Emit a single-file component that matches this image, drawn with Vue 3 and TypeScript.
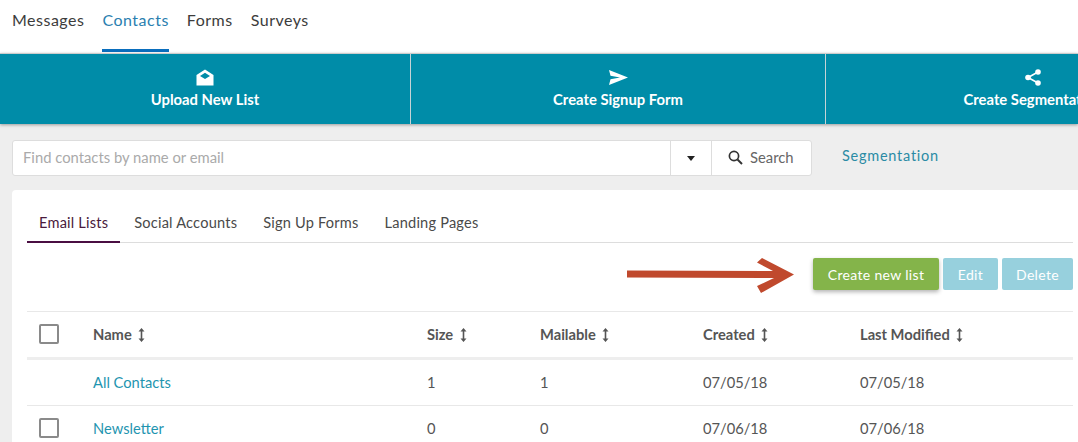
<script setup lang="ts">
const navItems = ['Messages', 'Contacts', 'Forms', 'Surveys']
const tabs = ['Email Lists', 'Social Accounts', 'Sign Up Forms', 'Landing Pages']
const columns = ['Name', 'Size', 'Mailable', 'Created', 'Last Modified']
const rows = [
  { name: 'All Contacts', size: '1', mailable: '1', created: '07/05/18', modified: '07/05/18', check: false },
  { name: 'Newsletter', size: '0', mailable: '0', created: '07/06/18', modified: '07/06/18', check: true },
]
</script>

<template>
  <div class="page">
    <nav class="nav">
      <a v-for="(n, i) in navItems" :key="n" class="nav-item" :class="{ active: i === 1 }">{{ n }}</a>
    </nav>

    <div class="band">
      <div class="tile">
        <svg width="18" height="16" viewBox="0 0 18 16"><path fill="#fff" fill-rule="evenodd" d="M9 0 L17.5 5.5 V16 H.5 V5.5 Z M9 3.2 L4 6.6 L9 9.6 L14 6.6 Z" /></svg>
        <span>Upload New List</span>
      </div>
      <div class="tile">
        <svg width="19" height="15" viewBox="0 0 19 15"><path fill="#fff" d="M0 0 L19 7.5 L0 15 L1.5 9.2 L11 7.5 L1.5 5.8 Z" /></svg>
        <span>Create Signup Form</span>
      </div>
      <div class="tile">
        <svg width="16" height="17" viewBox="0 0 16 17"><circle cx="13" cy="3" r="2.8" fill="#fff" /><circle cx="3" cy="8.5" r="2.8" fill="#fff" /><circle cx="13" cy="14" r="2.8" fill="#fff" /><path d="M13 3 L3 8.5 L13 14" fill="none" stroke="#fff" stroke-width="1.6" /></svg>
        <span>Create Segmentation</span>
      </div>
    </div>

    <main class="content">
      <div class="search-row">
        <div class="search">
          <div class="search-input">Find contacts by name or email</div>
          <div class="caret-box"><i class="caret"></i></div>
          <div class="search-btn">
            <svg width="15" height="15" viewBox="0 0 15 15"><circle cx="6" cy="6" r="4.6" fill="none" stroke="#333" stroke-width="1.7" /><path d="M9.5 9.5 L14 14" stroke="#333" stroke-width="2" /></svg>
            <span>Search</span>
          </div>
        </div>
        <a class="seg-link">Segmentation</a>
      </div>

      <section class="card">
        <div class="tabs">
          <a v-for="(t, i) in tabs" :key="t" class="tab" :class="{ active: i === 0 }">{{ t }}</a>
        </div>

        <div class="actions">
          <button class="btn primary">Create new list</button>
          <button class="btn muted edit">Edit</button>
          <button class="btn muted del">Delete</button>
          <svg class="arrow" width="168" height="36" viewBox="0 0 168 36"><path fill="#c0492d" d="M0 12.5 L146 13 L130 4.5 L135 0 L167 16.5 L134 35 L130 28 L147 20 L0 19.5 Z" /></svg>
        </div>

        <div class="table">
          <div class="row head">
            <div class="cell check"><i class="box"></i></div>
            <div v-for="c in columns" :key="c" class="cell">
              {{ c }}
              <svg class="sort" width="7" height="14" viewBox="0 0 7 14"><path d="M3.5 0 L6.5 3.5 H4.3 V10.5 H6.5 L3.5 14 L.5 10.5 H2.7 V3.5 H.5 Z" fill="#555" /></svg>
            </div>
          </div>
          <div v-for="r in rows" :key="r.name" class="row body">
            <div class="cell check"><i v-if="r.check" class="box"></i></div>
            <div class="cell link">{{ r.name }}</div>
            <div class="cell">{{ r.size }}</div>
            <div class="cell">{{ r.mailable }}</div>
            <div class="cell">{{ r.created }}</div>
            <div class="cell">{{ r.modified }}</div>
          </div>
        </div>
      </section>
    </main>
  </div>
</template>

<style>
html, body { margin: 0; background: #eee; overflow: hidden; }
</style>

<style scoped>
.page {
  width: 1078px;
  height: 442px;
  overflow: hidden;
  background: #eee;
  font-family: Lato, "Open Sans", sans-serif;
  font-size: 14.7px;
  color: #555;
}
.nav {
  height: 53px;
  box-sizing: border-box;
  background: #fff;
  display: flex;
  padding-left: 12px;
  gap: 18px;
}
.nav-item {
  font-size: 16px;
  letter-spacing: .5px;
  color: #3c3c3c;
  padding-top: 10px;
  height: 39px;
  border-bottom: 3px solid transparent;
}
.nav-item.active { color: #2b7fb0; border-bottom-color: #0a6ebd; }
.band {
  display: flex;
  height: 71px;
  background: #008ca8;
  box-shadow: 0 1px 3px rgba(0,0,0,.35);
  border-top: 1px solid #ccc;
  box-sizing: border-box;
  position: relative;
}
.tile {
  flex: 0 0 415px;
  border-right: 1px solid #c6d3d6;
  display: flex;
  flex-direction: column;
  align-items: center;
  padding-top: 15px;
  box-sizing: border-box;
  color: #fff;
  font-weight: 700;
  font-size: 14.8px;
  gap: 4px;
}
.tile:first-child { flex-basis: 411px; }
.tile span { white-space: nowrap; }
.tile svg { height: 17px; }
.content { padding: 16px 0 0 12px; }
.search-row { display: flex; align-items: flex-start; }
.search {
  width: 800px;
  height: 36px;
  box-sizing: border-box;
  display: flex;
  background: #fff;
  border: 1px solid #ddd;
  border-radius: 3px;
}
.search-input { flex: 1; padding: 0 10px; line-height: 32px; color: #aaa; font-size: 14.8px; }
.caret-box {
  width: 40px;
  border-left: 1px solid #ddd;
  display: flex;
  align-items: center;
  justify-content: center;
}
.caret { border: 4px solid transparent; border-top: 5px solid #222; border-bottom: 0; }
.search-btn {
  width: 100px;
  box-sizing: border-box;
  border-left: 1px solid #ddd;
  display: flex;
  align-items: center;
  padding: 0 0 2px 16px;
  gap: 7px;
  font-size: 14.8px;
  color: #666;
}
.seg-link { margin-left: 30px; padding-top: 7px; color: #2a8ba5; font-size: 14.5px; letter-spacing: .75px; }
.card {
  margin-top: 14px;
  background: #fff;
  border-radius: 4px 0 0 0;
  padding: 15px 5px 0 15px;
  width: 1066px;
  box-sizing: border-box;
  height: 260px;
}
.tabs {
  display: flex;
  height: 38px;
  box-sizing: border-box;
  border-bottom: 1px solid #ddd;
}
.tab {
  padding: 9px 12px 0;
  margin-right: 2px;
  height: 38px;
  box-sizing: border-box;
  font-size: 14.6px;
  color: #4a4a4a;
  letter-spacing: .2px;
}
.tab.active { color: #4a1a3c; border-bottom: 2px solid #4a0e42; }
.actions {
  position: relative;
  display: flex;
  justify-content: flex-end;
  gap: 4px;
  padding-top: 15px;
  height: 69px;
  box-sizing: border-box;
  border-bottom: 1px solid #e8e8e8;
}
.btn {
  height: 32px;
  border: 0;
  border-radius: 2px;
  color: #fff;
  font: inherit;
  font-size: 14px;
  letter-spacing: .33px;
  padding: 0;
}
.primary { width: 126px; background: #84b44a; box-shadow: 0 2px 4px rgba(0,0,0,.3); }
.muted { background: #97d0dd; }
.edit { width: 55px; }
.del { width: 71px; }
.arrow { position: absolute; left: 600px; top: 15px; }
.row { display: grid; grid-template-columns: 66px 334px 113px 163px 157px 1fr; align-items: center; box-sizing: border-box; }
.head {
  height: 48px;
  border-bottom: 3px solid #eee;
  font-weight: 700;
  color: #555;
  padding-bottom: 1px;
}
.body { height: 46px; border-bottom: 1px solid #e8e8e8; color: #555; padding-bottom: 1px; }
.body:last-child { border-bottom: 0; padding-bottom: 2px; }
.check { padding-left: 12px; display: flex; align-items: center; }
.box {
  display: block;
  width: 20px;
  height: 20px;
  box-sizing: border-box;
  border: 2px solid #8a8a8a;
  border-radius: 2px;
}
.link { color: #1f95b0; }
.sort { vertical-align: -2px; margin-left: 3px; }
</style>
